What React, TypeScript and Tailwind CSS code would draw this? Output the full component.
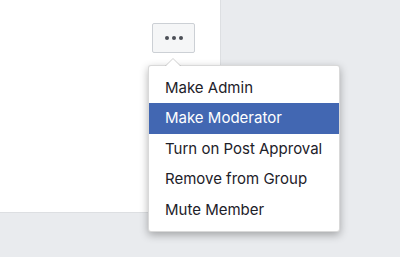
export default function App() {
  const items = [
    "Make Admin",
    "Make Moderator",
    "Turn on Post Approval",
    "Remove from Group",
    "Mute Member",
  ];
  return (
    <div
      className="relative w-[400px] h-[257px] overflow-hidden bg-[#e9ebee]"
      style={{ fontFamily: "Inter, 'Liberation Sans', sans-serif" }}
    >
      <div className="w-[221px] h-[213px] bg-white border-r border-b border-[#dddfe2] pt-[23px] pl-[152px]">
        <button className="flex items-center justify-center gap-[3px] w-[43px] h-[30px] rounded-[2px] border border-[#ccd0d5] bg-[#f5f6f7]">
          <span className="w-[4px] h-[4px] rounded-full bg-[#4b4f56]" />
          <span className="w-[4px] h-[4px] rounded-full bg-[#4b4f56]" />
          <span className="w-[4px] h-[4px] rounded-full bg-[#4b4f56]" />
        </button>
      </div>

      <div className="absolute left-[148px] top-[65px] w-[192px] rounded-[3px] border border-[rgba(0,0,0,0.15)] bg-white pt-[6.5px] pb-[6px] shadow-[0_3px_8px_rgba(0,0,0,0.3)]">
        <svg
          className="absolute left-[16px] top-[-8px]"
          width="16"
          height="9"
          viewBox="0 0 16 9"
        >
          <path d="M0 8.5 L8 0.5 L16 8.5" fill="white" stroke="rgba(0,0,0,0.18)" />
          <rect x="0" y="8" width="16" height="1" fill="white" />
        </svg>
        {items.map((item, index) => (
          <div
            key={index}
            className={
              index === 1
                ? "h-[30.5px] flex items-center pl-[16px] text-[15px] bg-[#4267b2] text-white"
                : "h-[30.5px] flex items-center pl-[16px] text-[15px] text-[#1d2129]"
            }
          >
            {item}
          </div>
        ))}
      </div>
    </div>
  );
}
